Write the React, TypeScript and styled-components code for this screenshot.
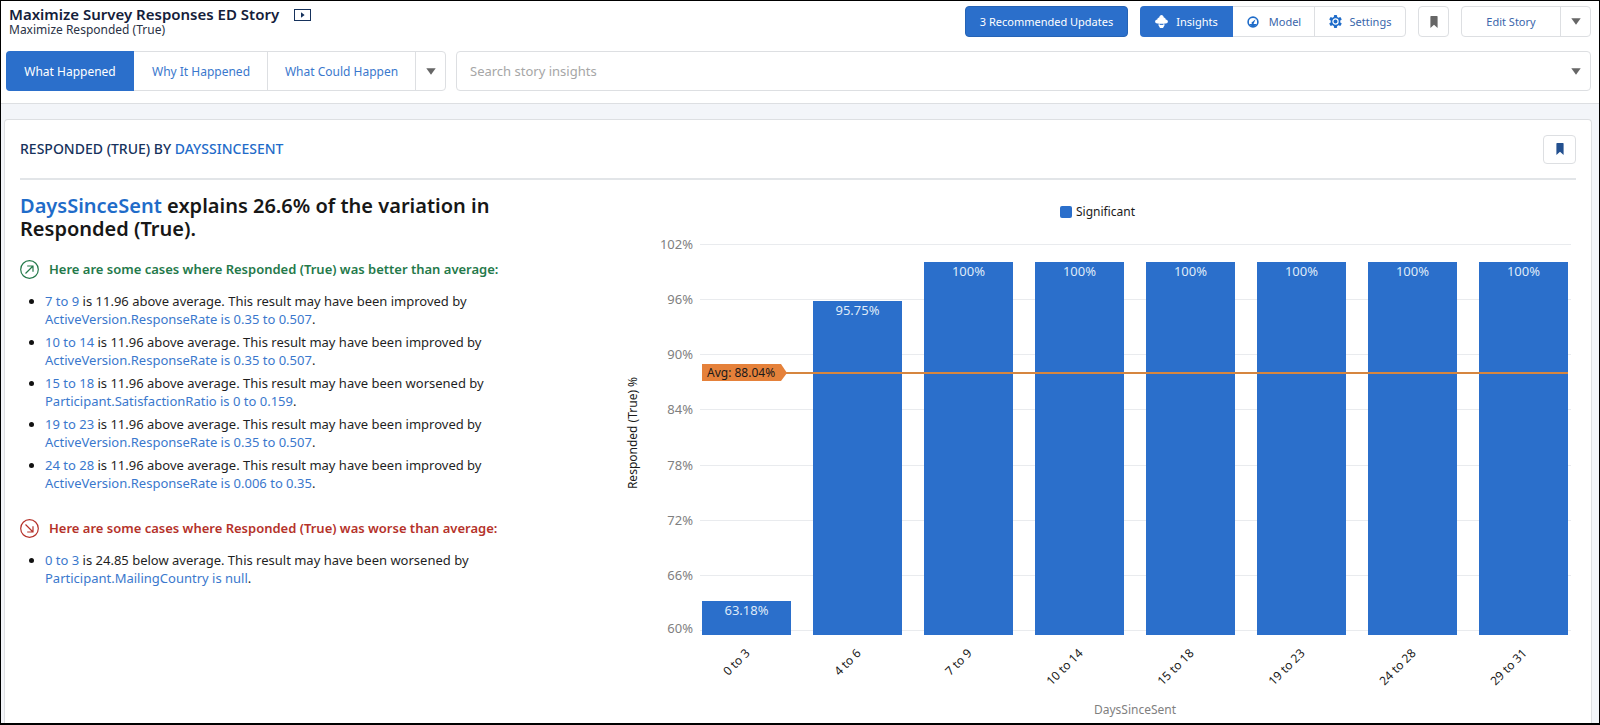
import React from 'react';
import styled, { createGlobalStyle, css } from 'styled-components';

const color = {
  brand: '#2b6fcb',
  link: '#3a78cd',
  strongLink: '#1f6cc9',
  navy: '#16325c',
  text: '#1f1f1f',
  muted: '#7f7f7f',
  border: '#dddfe2',
  canvas: '#f3f5f9',
  good: '#24794a',
  bad: '#b5322a',
  average: '#e5813a',
};

const GlobalStyle = createGlobalStyle`
  *, *::before, *::after { box-sizing: border-box; }
  body {
    margin: 0;
    font-family: 'Noto Sans', 'Open Sans', sans-serif;
    font-size: 13px;
    color: ${color.text};
    background: #fff;
  }
  button, input { font-family: inherit; margin: 0; }
  h1, h2, h3, p, ul { margin: 0; padding: 0; font-weight: inherit; }
`;

const Page = styled.div`
  display: flex;
  flex-direction: column;
  min-height: 100vh;
  border: 1px solid #000;
  border-bottom-width: 2px;
  background: ${color.canvas};
`;

const Header = styled.header`
  display: flex;
  flex-direction: column;
  gap: 14px;
  padding: 5px 8px 12px 5px;
  background: #fff;
  border-bottom: 1px solid ${color.border};
`;

const HeaderRow = styled.div<{ $gap: number }>`
  display: flex;
  align-items: center;
  gap: ${(p) => p.$gap}px;
`;

const TitleBlock = styled.div`
  flex: 1;
  padding-left: 3px;
`;

const TitleLine = styled.div`
  display: flex;
  align-items: center;
  gap: 15px;
`;

const StoryTitle = styled.h1`
  font-size: 15px;
  line-height: 17px;
  font-weight: 600;
  color: #14203a;
`;

const Subtitle = styled.p`
  font-size: 12px;
  line-height: 14px;
  color: #2a3245;
`;

const IconButton = styled.button<{ $width: number; $height: number; $color: string }>`
  display: flex;
  align-items: center;
  justify-content: center;
  width: ${(p) => p.$width}px;
  height: ${(p) => p.$height}px;
  padding: 0;
  border: 1px solid ${color.border};
  border-radius: 4px;
  background: #fff;
  color: ${(p) => p.$color};
`;

const PlayButton = styled.button`
  display: flex;
  padding: 0;
  border: 0;
  background: none;
  color: ${color.navy};
`;

const PrimaryButton = styled.button`
  width: 163px;
  height: 31px;
  padding: 0;
  border: 1px solid #2563b5;
  border-radius: 4px;
  background: ${color.brand};
  color: #fff;
  font-size: 11px;
`;

const Group = styled.div<{ $height: number }>`
  display: flex;
  height: ${(p) => p.$height}px;
  border: 1px solid ${color.border};
  border-radius: 4px;
  background: #fff;
`;

const Segment = styled.button<{ $width: number; $active?: boolean; $size?: number; $gap?: number }>`
  display: flex;
  align-items: center;
  justify-content: center;
  gap: ${(p) => p.$gap ?? 8}px;
  width: ${(p) => p.$width}px;
  padding: 0;
  border: 0;
  border-left: 1px solid ${color.border};
  background: none;
  color: ${(p) => (p.$size ? '#3a66ab' : color.link)};
  font-size: ${(p) => p.$size ?? 12}px;
  white-space: nowrap;
  &:first-child { border-left: 0; }
  ${(p) =>
    p.$active &&
    css`
      margin: -1px 0 -1px -1px;
      border-radius: 4px 0 0 4px;
      background: ${color.brand};
      color: #fff;
      & + button { border-left-color: transparent; }
    `}
`;

const Actions = styled.div`
  display: flex;
  align-items: center;
  gap: 12px;
`;

const SearchBox = styled.div`
  display: flex;
  flex: 1;
  align-items: center;
  height: 40px;
  padding: 0 0 0 13px;
  border: 1px solid ${color.border};
  border-radius: 4px;
`;

const SearchInput = styled.input`
  flex: 1;
  min-width: 0;
  padding: 0;
  border: 0;
  outline: 0;
  background: none;
  font-size: 13px;
  &::placeholder { color: #a6a6a6; opacity: 1; }
`;

const DropButton = styled.button`
  display: flex;
  justify-content: center;
  width: 28px;
  padding: 0;
  border: 0;
  background: none;
`;

const Card = styled.main`
  flex: 1;
  margin: 15px 7px 0 3px;
  padding: 0 15px;
  border: 1px solid ${color.border};
  border-bottom: 0;
  border-radius: 4px 4px 0 0;
  background: #fff;
`;

const CardHeader = styled.div`
  display: flex;
  align-items: center;
  justify-content: space-between;
  height: 60px;
  border-bottom: 2px solid #e2e5e8;
`;

const CardTitle = styled.h2`
  font-size: 14px;
  line-height: 20px;
  font-weight: 500;
  text-transform: uppercase;
  color: ${color.navy};
`;

const Link = styled.a<{ $strong?: boolean }>`
  color: ${(p) => (p.$strong ? color.strongLink : color.link)};
  text-decoration: none;
`;

const CardBody = styled.div`
  display: flex;
  gap: 80px;
`;

const Narrative = styled.section`
  flex: 0 0 500px;
  padding-top: 14px;
`;

const Explanation = styled.h2`
  font-size: 20px;
  line-height: 23px;
  font-weight: 600;
  color: #171717;
`;

const CaseHeading = styled.h3<{ $tone: string }>`
  display: flex;
  align-items: center;
  gap: 10px;
  height: 20px;
  margin-top: 19px;
  font-size: 13px;
  font-weight: 600;
  color: ${(p) => p.$tone};
`;

const CaseList = styled.ul`
  display: flex;
  flex-direction: column;
  gap: 5px;
  margin: 13px 0 26px;
  padding-left: 25px;
  font-size: 13px;
  line-height: 18px;
`;

const CaseItem = styled.li`
  &::marker { color: #111; }
`;

const ChartPanel = styled.section`
  flex: 1;
  min-width: 0;
`;

const ChartSvg = styled.svg`
  display: block;
  width: 100%;
  font-size: 12px;
`;

const ValueText = styled.text`
  font-size: 13px;
`;

const PlayIcon = () => (
  <svg width="17" height="12" viewBox="0 0 17 12" aria-hidden="true">
    <rect x="0.5" y="0.5" width="16" height="11" fill="none" stroke="currentColor" />
    <path d="M7 3.2 10.6 6 7 8.8Z" fill="currentColor" />
  </svg>
);

const Caret = () => (
  <svg width="10" height="7" viewBox="0 0 10 7" aria-hidden="true">
    <path d="M0.3 0.3H9.7L5 6.8Z" fill="#666" />
  </svg>
);

const BookmarkIcon = () => (
  <svg width="8" height="12" viewBox="0 0 8 12" aria-hidden="true">
    <path d="M1 0H7Q7.6 0 7.6 0.7V12L4 8.8 0.4 12V0.7Q0.4 0 1 0Z" fill="currentColor" />
  </svg>
);

const InsightsIcon = () => (
  <svg width="13" height="13" viewBox="0 0 13 13" aria-hidden="true">
    <path
      d="M6.5 0C7.6 0 8.6 1 8.8 2.4 10 2.5 10.7 3.4 10.7 4.5 12 4.7 12.9 5.5 12.9 6.6 12.9 7.8 12 8.6 10.7 8.6H2.3C1 8.6 0.1 7.8 0.1 6.6 0.1 5.5 1 4.7 2.3 4.5 2.3 3.4 3 2.5 4.2 2.4 4.4 1 5.4 0 6.5 0Z"
      fill="#fff"
    />
    <path d="M3.6 8.2H9.4V10.6L8 12.9H5L3.6 10.6Z" fill="#fff" />
    <path d="M4.6 9.4H8.4" stroke={color.brand} strokeWidth="1" />
  </svg>
);

const ModelIcon = () => (
  <svg width="12" height="12" viewBox="0 0 12 12" aria-hidden="true">
    <circle cx="6" cy="6" r="4.9" fill="none" stroke={color.strongLink} strokeWidth="1.6" />
    <path d="M2 8H10A4.6 4.6 0 0 1 2 8Z" fill={color.strongLink} />
    <path d="M8.6 3.2 6.9 6.9A1.2 1.2 0 1 1 5.2 5.9Z" fill={color.strongLink} />
  </svg>
);

const GearIcon = () => (
  <svg width="13" height="13" viewBox="0 0 13 13" aria-hidden="true">
    <g fill={color.strongLink}>
      {[0, 60, 120].map((angle) => (
        <rect key={angle} x="4.9" y="0" width="3.2" height="13" rx="0.8" transform={`rotate(${angle} 6.5 6.5)`} />
      ))}
      <circle cx="6.5" cy="6.5" r="4.8" />
    </g>
    <circle cx="6.5" cy="6.5" r="2.6" fill="none" stroke="#fff" strokeWidth="1.2" />
  </svg>
);

const TrendIcon = ({ up }: { up: boolean }) => (
  <svg width="19" height="19" viewBox="0 0 19 19" fill="none" stroke="currentColor" strokeWidth="1.2" aria-hidden="true">
    <circle cx="9.5" cy="9.5" r="8.8" />
    {up ? <path d="M5.5 13.5 13 6M7.2 6H13V11.8" /> : <path d="M5.5 5.5 13 13M13 7.2V13H7.2" />}
  </svg>
);

type Case = { range: string; result: string; effect: string; factor: string };

const above = '11.96 above average';
const betterCases: Case[] = [
  { range: '7 to 9', result: above, effect: 'improved', factor: 'ActiveVersion.ResponseRate is 0.35 to 0.507' },
  { range: '10 to 14', result: above, effect: 'improved', factor: 'ActiveVersion.ResponseRate is 0.35 to 0.507' },
  { range: '15 to 18', result: above, effect: 'worsened', factor: 'Participant.SatisfactionRatio is 0 to 0.159' },
  { range: '19 to 23', result: above, effect: 'improved', factor: 'ActiveVersion.ResponseRate is 0.35 to 0.507' },
  { range: '24 to 28', result: above, effect: 'improved', factor: 'ActiveVersion.ResponseRate is 0.006 to 0.35' },
];
const worseCases: Case[] = [
  { range: '0 to 3', result: '24.85 below average', effect: 'worsened', factor: 'Participant.MailingCountry is null' },
];

const Cases = ({ items }: { items: Case[] }) => (
  <CaseList>
    {items.map((c) => (
      <CaseItem key={c.range}>
        <Link href="#">{c.range}</Link> is {c.result}. This result may have been {c.effect} by
        <br />
        <Link href="#">{c.factor}</Link>.
      </CaseItem>
    ))}
  </CaseList>
);

const bars: [string, number][] = [
  ['0 to 3', 63.18],
  ['4 to 6', 95.75],
  ['7 to 9', 100],
  ['10 to 14', 100],
  ['15 to 18', 100],
  ['19 to 23', 100],
  ['24 to 28', 100],
  ['29 to 31', 100],
];
const ticks = [102, 96, 90, 84, 78, 72, 66, 60];

const left = 101;
const right = 970;
const base = 455;
const barStep = 111;
const barWidth = 89;
const yOf = (value: number) => Math.round(64 + (102 - value) * 9.19);

const Chart = () => (
  <ChartSvg viewBox="0 0 976 540" role="img" aria-label="Responded (True) % by DaysSinceSent">
    <rect x="460" y="26" width="12" height="12" rx="2" fill={color.brand} />
    <text x="476" y="36" fill="#1a1a1a">Significant</text>
    {ticks.map((tick) => (
      <g key={tick}>
        <path d={`M${left - 1} ${yOf(tick) + 0.5}H${right + 1}`} stroke="#e9ebee" />
        <ValueText x={left - 8} y={Math.min(yOf(tick) + 5, base - 2)} textAnchor="end" fill={color.muted}>
          {tick}%
        </ValueText>
      </g>
    ))}
    {bars.map(([label, value], i) => {
      const x = left + 1 + i * barStep;
      const mid = x + barWidth / 2;
      return (
        <g key={label}>
          <rect x={x} y={yOf(value)} width={barWidth} height={base - yOf(value)} fill={color.brand} />
          <ValueText x={mid} y={yOf(value) + 14} textAnchor="middle" fill="#dfeaf8">
            {value}%
          </ValueText>
          <text transform={`translate(${mid + 4} ${base + 19}) rotate(-45)`} textAnchor="end" fill="#1a1a1a">
            {label}
          </text>
        </g>
      );
    })}
    <path d={`M${left + 84} ${yOf(88.04) + 1}H${right - 2}`} stroke="#d6863f" strokeWidth="2" />
    <path d={`M${left + 1} ${yOf(88.04) - 8}h79l6 9-6 8h-79Z`} fill={color.average} />
    <text x={left + 6} y={yOf(88.04) + 5} fill="#1a1a1a">Avg: 88.04%</text>
    <text transform="translate(37 253) rotate(-90)" textAnchor="middle" fill="#1a1a1a">
      Responded (True) %
    </text>
    <text x="535" y="534" textAnchor="middle" fill={color.muted}>
      DaysSinceSent
    </text>
  </ChartSvg>
);

export default function App() {
  return (
    <>
      <GlobalStyle />
      <Page>
        <Header>
          <HeaderRow $gap={12}>
            <TitleBlock>
              <TitleLine>
                <StoryTitle>Maximize Survey Responses ED Story</StoryTitle>
                <PlayButton aria-label="Play story"><PlayIcon /></PlayButton>
              </TitleLine>
              <Subtitle>Maximize Responded (True)</Subtitle>
            </TitleBlock>
            <Actions>
              <PrimaryButton>3 Recommended Updates</PrimaryButton>
              <Group $height={31}>
                <Segment $width={93} $size={11} $active><InsightsIcon />Insights</Segment>
                <Segment $width={81} $size={11} $gap={10}><ModelIcon />Model</Segment>
                <Segment $width={91} $size={11}><GearIcon />Settings</Segment>
              </Group>
              <IconButton $width={31} $height={31} $color="#666" aria-label="Bookmarks"><BookmarkIcon /></IconButton>
              <Group $height={31}>
                <Segment $width={98} $size={11}>Edit Story</Segment>
                <Segment $width={30} $size={11} aria-label="More actions"><Caret /></Segment>
              </Group>
            </Actions>
          </HeaderRow>
          <HeaderRow $gap={10}>
            <Group $height={40}>
              <Segment $width={128} $active>What Happened</Segment>
              <Segment $width={133}>Why It Happened</Segment>
              <Segment $width={148}>What Could Happen</Segment>
              <Segment $width={30} aria-label="More insight types"><Caret /></Segment>
            </Group>
            <SearchBox>
              <SearchInput placeholder="Search story insights" aria-label="Search story insights" />
              <DropButton aria-label="Show insights"><Caret /></DropButton>
            </SearchBox>
          </HeaderRow>
        </Header>
        <Card>
          <CardHeader>
            <CardTitle>
              Responded (True) by <Link href="#" $strong>DaysSinceSent</Link>
            </CardTitle>
            <IconButton $width={33} $height={29} $color="#23508f" aria-label="Bookmark this insight"><BookmarkIcon /></IconButton>
          </CardHeader>
          <CardBody>
            <Narrative>
              <Explanation>
                <Link href="#" $strong>DaysSinceSent</Link> explains 26.6% of the variation in Responded (True).
              </Explanation>
              <CaseHeading $tone={color.good}>
                <TrendIcon up />
                Here are some cases where Responded (True) was better than average:
              </CaseHeading>
              <Cases items={betterCases} />
              <CaseHeading $tone={color.bad}>
                <TrendIcon up={false} />
                Here are some cases where Responded (True) was worse than average:
              </CaseHeading>
              <Cases items={worseCases} />
            </Narrative>
            <ChartPanel>
              <Chart />
            </ChartPanel>
          </CardBody>
        </Card>
      </Page>
    </>
  );
}
